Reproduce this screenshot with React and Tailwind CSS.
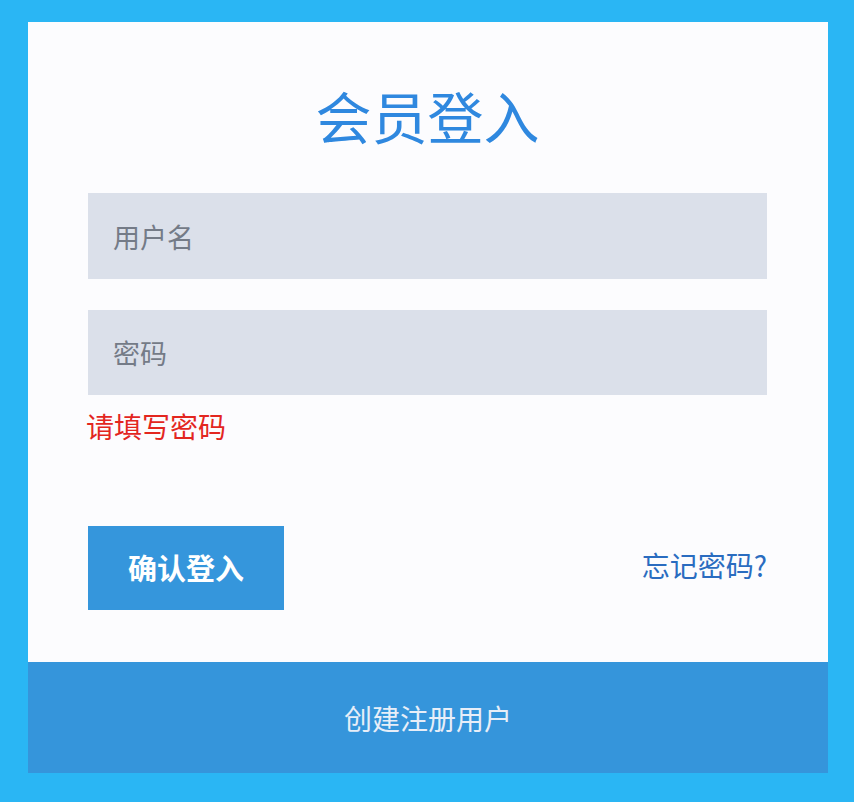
import { useState } from "react";

const font = { fontFamily: '"Noto Sans CJK SC", "Noto Sans", sans-serif' };

export default function App() {
  const [user, setUser] = useState("");
  const [pwd, setPwd] = useState("");

  return (
    <div
      className="w-[854px] h-[802px] bg-[#2ab6f4] pt-[22px] pl-[28px] pr-[26px] pb-[29px]"
      style={font}
    >
      <div className="flex flex-col h-full">
        {/* login card */}
        <div className="bg-[#fcfcfe] flex-1 px-[60px] pr-[61px] pt-[62px] flex flex-col">
          <h1 className="text-center text-[56px] leading-[62px] text-[#2f88df] font-normal mb-[47px]">
            会员登入
          </h1>

          <input
            value={user}
            onChange={(e) => setUser(e.target.value)}
            placeholder="用户名"
            className="h-[86px] w-full bg-[#dbe0ea] px-[25px] text-[27px] text-[#4b5563] placeholder:text-[#747b87] outline-none"
          />
          <input
            type="password"
            value={pwd}
            onChange={(e) => setPwd(e.target.value)}
            placeholder="密码"
            className="h-[85px] w-full bg-[#dbe0ea] px-[25px] mt-[31px] text-[27px] text-[#4b5563] placeholder:text-[#747b87] outline-none"
          />
          <p className="mt-[16px] -ml-[2px] text-[28px] leading-[30px] text-[#e3261f]">
            请填写密码
          </p>

          <div className="mt-[85px] flex items-center justify-between">
            <button
              type="button"
              className="w-[196px] h-[84px] bg-[#3596dc] text-white text-[29px] font-bold"
            >
              确认登入
            </button>
            <a href="#" className="text-[28px] text-[#2a6cc0] -mt-[6px]">
              忘记密码?
            </a>
          </div>
        </div>

        {/* register bar */}
        <div className="h-[111px] bg-[#3595db] flex items-center justify-center">
          <span className="text-[28px] text-[#e7eef8]">创建注册用户</span>
        </div>
      </div>
    </div>
  );
}
